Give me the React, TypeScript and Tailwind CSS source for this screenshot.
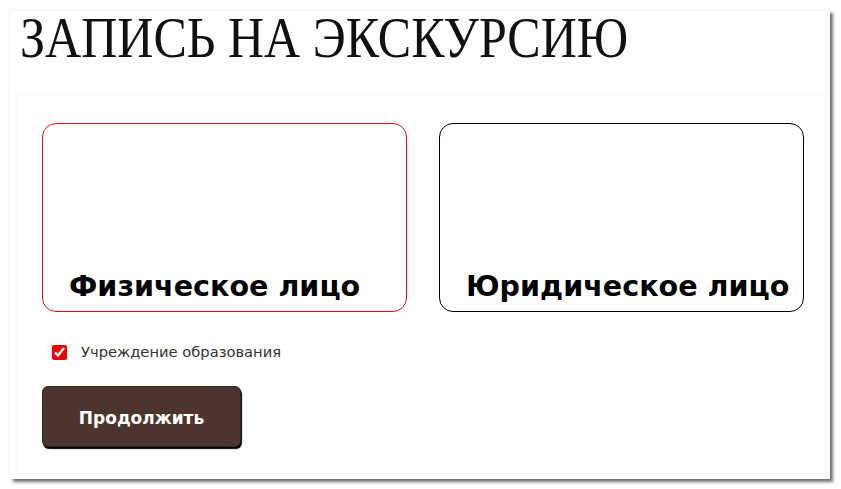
import { useState } from 'react';

const serif = { fontFamily: '"Liberation Serif", "Times New Roman", serif' };
const sans = { fontFamily: '"DejaVu Sans", Verdana, sans-serif' };

function TypeCard({ label, active }: { label: string; active?: boolean }) {
  return (
    <button
      type="button"
      className={`flex h-[189px] w-[365px] items-end rounded-[14px] border bg-white pb-[7px] pl-[26px] text-left ${
        active ? 'border-[#d3121b]' : 'border-black'
      }`}
    >
      <span className="text-[28.6px] font-bold leading-[36px] text-black" style={sans}>
        {label}
      </span>
    </button>
  );
}

export default function App() {
  const [school, setSchool] = useState(true);

  return (
    <div className="min-h-screen bg-white pl-[10px] pt-[10px]">
      <div className="h-[469px] w-[820px] bg-white shadow-[0_0_2px_rgba(0,0,0,0.12),3px_3px_3px_rgba(0,0,0,0.55)]">
        {/* Title */}
        <div className="h-[86px] pl-[10px]">
          <h1
            className="origin-left scale-x-[0.893] whitespace-nowrap text-[56px] font-normal leading-none text-[#111]"
            style={serif}
          >
            ЗАПИСЬ НА ЭКСКУРСИЮ
          </h1>
        </div>

        {/* Form */}
        <div className="ml-[7px] mr-[6px] h-[377px] bg-white pb-[26px] pl-[25px] pt-[27px] shadow-[0_0_6px_rgba(0,0,0,0.06)]">
          <div className="flex gap-[32px]">
            <TypeCard label="Физическое лицо" active />
            <TypeCard label="Юридическое лицо" />
          </div>

          <label className="mt-[29px] flex items-center gap-[14px] pl-[10px]">
            <input
              type="checkbox"
              checked={school}
              onChange={(e) => setSchool(e.target.checked)}
              className="m-0 h-[15px] w-[15px] accent-[#e8000b]"
            />
            <span className="text-[14.7px] text-[#333]" style={sans}>
              Учреждение образования
            </span>
          </label>

          <button
            type="button"
            className="mt-[23px] h-[61px] w-[199px] rounded-[6px] border border-[#3a2620] bg-[#4e342e] pt-[5px] text-[17px] font-bold text-white shadow-[1px_2px_1px_#000]"
            style={sans}
          >
            Продолжить
          </button>
        </div>
      </div>
    </div>
  );
}
